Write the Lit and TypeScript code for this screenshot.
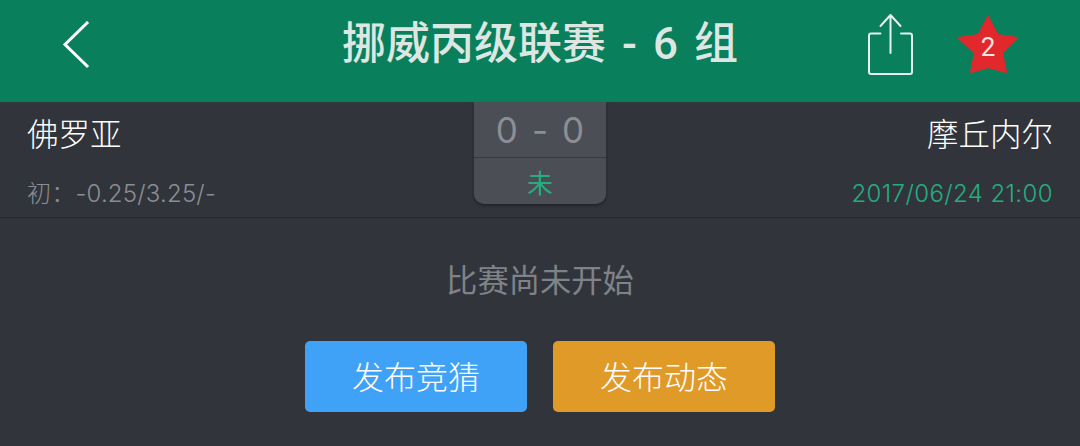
import {LitElement, html, css} from "lit";
import {customElement} from "lit/decorators.js";

@customElement("app-root")
class AppRoot extends LitElement {
    static styles = css`
        :host {
            display: block;
            width: 1080px;
            height: 446px;
            overflow: hidden;
            background: #31353b;
            font-family: "Noto Sans CJK SC", "Liberation Sans", sans-serif;
            font-weight: 300;
        }

        .nav {
            height: 102px;
            background: #097f5c;
            display: flex;
            align-items: center;
            position: relative;
        }

        .back {
            margin-left: 62px;
            margin-bottom: 12px;
            width: 28px;
            height: 48px;
        }

        .title {
            position: absolute;
            left: 0;
            right: 0;
            top: 15px;
            text-align: center;
            font-family: Roboto, "Noto Sans CJK SC", sans-serif;
            font-size: 44px;
            line-height: 58px;
            font-weight: 500;
            word-spacing: 5px;
            color: #dce6e2;
        }

        .share {
            margin-left: auto;
            margin-bottom: 14px;
            width: 47px;
            height: 62px;
        }

        .star {
            margin-left: 43px;
            margin-right: 61px;
            margin-bottom: 14px;
            width: 62px;
            height: 60px;
            position: relative;
        }

        .star svg {
            display: block;
        }

        .star span {
            position: absolute;
            left: 0;
            right: 0;
            top: 17px;
            text-align: center;
            font-family: Roboto, sans-serif;
            font-weight: 400;
            font-size: 26px;
            line-height: 32px;
            color: #f6e6e4;
        }

        .match {
            height: 116px;
            box-sizing: border-box;
            border-bottom: 1px solid #26292f;
            padding: 0 27px;
            display: grid;
            grid-template-columns: 1fr 132px 1fr;
            position: relative;
        }

        .side {
            display: flex;
            flex-direction: column;
            justify-content: space-between;
            padding: 8px 0 8px;
        }

        .side.away {
            align-items: flex-end;
        }

        .name {
            font-size: 31.5px;
            line-height: 44px;
            color: #fff;
        }

        .info {
            font-size: 24px;
            line-height: 30px;
            letter-spacing: 0.2px;
            color: #8a8e94;
            font-family: Inter, "Noto Sans CJK SC", sans-serif;
        }

        .info.time {
            letter-spacing: 0.4px;
            color: #25ad80;
        }

        .score {
            height: 102px;
            background: #4b4e54;
            border-radius: 0 0 10px 10px;
            box-shadow: 0 2px 3px rgba(0, 0, 0, 0.35);
            display: flex;
            flex-direction: column;
        }

        .goals {
            flex: none;
            height: 55px;
            border-bottom: 1px solid #35383e;
            display: flex;
            align-items: center;
            justify-content: center;
            gap: 14px;
            font-family: Inter, sans-serif;
            font-size: 35px;
            font-weight: 400;
            color: #8b8f95;
        }

        .state {
            flex: 1;
            text-align: center;
            font-size: 26px;
            font-weight: 400;
            line-height: 48px;
            color: #25ad80;
        }

        .empty {
            margin-top: 37px;
            text-align: center;
            font-size: 31.3px;
            font-weight: 400;
            line-height: 48px;
            color: #7f8389;
        }

        .actions {
            margin-top: 38px;
            display: flex;
            justify-content: center;
            gap: 26px;
        }

        .btn {
            width: 222px;
            height: 71px;
            box-sizing: border-box;
            padding-bottom: 4px;
            border-radius: 5px;
            display: flex;
            align-items: center;
            justify-content: center;
            font-size: 32px;
            color: #fff;
        }

        .blue {
            background: #3fa2f7;
        }

        .orange {
            background: #e09a28;
        }
    `;

    render() {
        return html`
            <div class="nav">
                <svg class="back" viewBox="0 0 28 48" fill="none" stroke="#fff" stroke-width="3" stroke-linecap="square">
                    <path d="M25 2 L3 23.500 L25 45" />
                </svg>
                <div class="title">挪威丙级联赛 - 6 组</div>
                <svg class="share" viewBox="0 0 47 62" fill="none" stroke="#e4f3ee" stroke-width="2" stroke-linecap="round" stroke-linejoin="round">
                    <path d="M13.500 20.500 H4 Q2 20.500 2 22.500 V59 Q2 61 4 61 H43 Q45 61 45 59 V22.500 Q45 20.500 43 20.500 H34" />
                    <path d="M23.500 40 V2 M13.500 13 L23.500 2 L33.500 13" />
                </svg>
                <div class="star">
                    <svg width="62" height="60" viewBox="0 0 62 60">
                        <path fill="#e1282d" stroke="#e1282d" stroke-width="2" stroke-linejoin="round" d="M31 3 L40.500 21 L60 24 L45 39 L49 58 L31 53 L14 58 L18 39 L2 24 L21.500 21 Z" />
                    </svg>
                    <span>2</span>
                </div>
            </div>
            <div class="match">
                <div class="side">
                    <div class="name">佛罗亚</div>
                    <div class="info">初：-0.25/3.25/-</div>
                </div>
                <div class="score">
                    <div class="goals"><span>0</span><span>-</span><span>0</span></div>
                    <div class="state">未</div>
                </div>
                <div class="side away">
                    <div class="name">摩丘内尔</div>
                    <div class="info time">2017/06/24 21:00</div>
                </div>
            </div>
            <div class="empty">比赛尚未开始</div>
            <div class="actions">
                <div class="btn blue">发布竞猜</div>
                <div class="btn orange">发布动态</div>
            </div>
        `;
    }
}

declare global {
    interface HTMLElementTagNameMap {
        "app-root": AppRoot;
    }
}
